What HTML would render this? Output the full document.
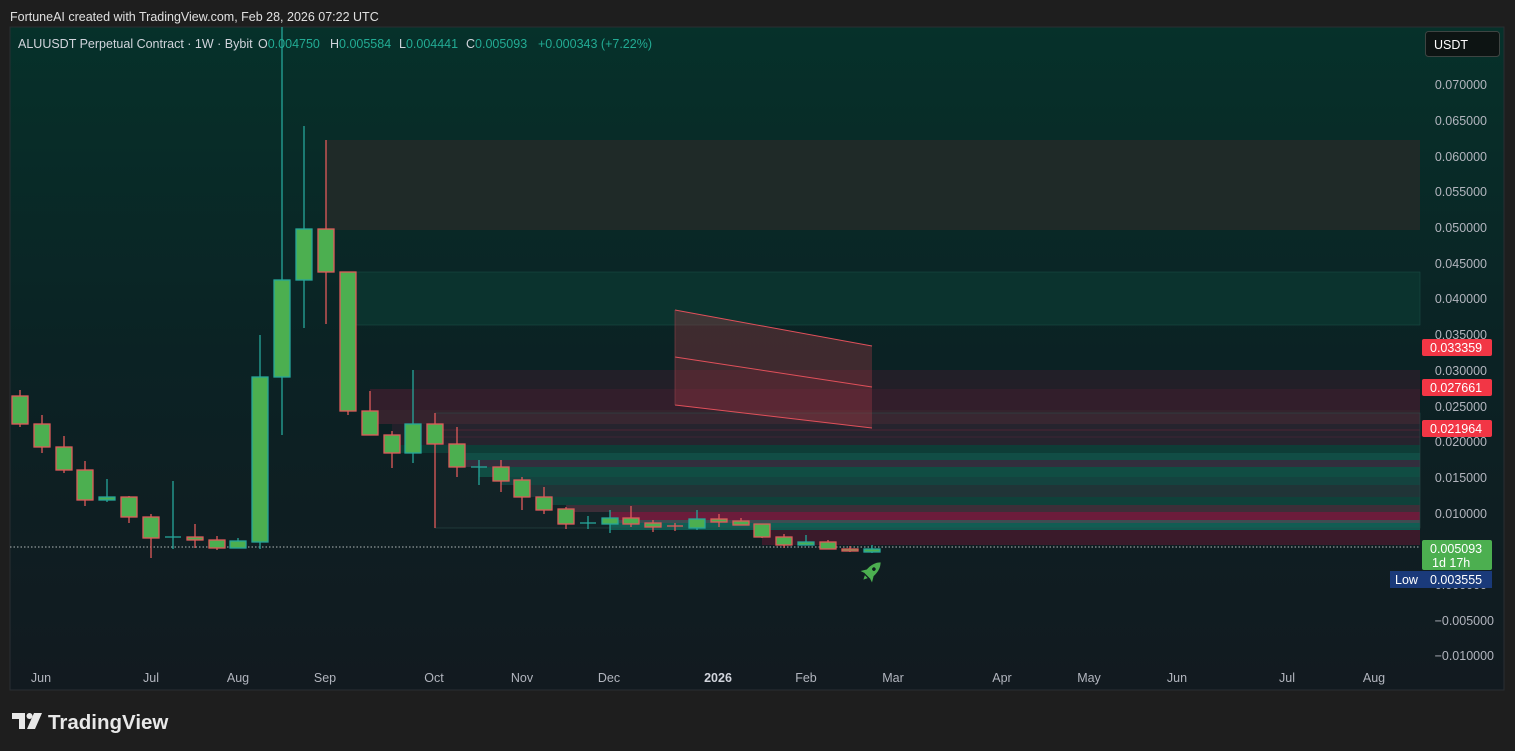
<!DOCTYPE html>
<html><head><meta charset="utf-8"><style>
html,body{margin:0;padding:0;background:#1e1e1e;width:1515px;height:751px;overflow:hidden;font-family:"Liberation Sans",Arial,sans-serif}
</style></head><body>
<svg width="1515" height="751" viewBox="0 0 1515 751" xmlns="http://www.w3.org/2000/svg" font-family="Liberation Sans, Arial, sans-serif">
<defs>
<linearGradient id="bg" x1="0" y1="0" x2="0" y2="1">
<stop offset="0" stop-color="#06312a"/><stop offset="0.5" stop-color="#0b2224"/><stop offset="1" stop-color="#121a20"/>
</linearGradient>
</defs>
<rect width="1515" height="751" fill="#1e1e1e"/>
<text x="10" y="21" font-size="12.5" fill="#e0e0e0">FortuneAI created with TradingView.com, Feb 28, 2026 07:22 UTC</text>
<rect x="10" y="27" width="1494" height="663" fill="url(#bg)" stroke="#2a2e33"/>
<!-- zones -->
<rect x="326" y="140" width="1094" height="90" fill="#1f2a28"/>
<rect x="348" y="272" width="1072" height="53" fill="#0b332e" stroke="#1a4a44" stroke-width="0.6"/>
<rect x="413" y="370" width="1007" height="19" fill="#221f28"/>
<rect x="370" y="389" width="1050" height="21" fill="#321e2b"/>
<rect x="370" y="410" width="1050" height="14" fill="#35232d"/>
<rect x="392" y="424" width="1028" height="21" fill="#22202a"/>
<line x1="435" y1="430" x2="1420" y2="430" stroke="#4a2030"/>
<line x1="435" y1="437" x2="1420" y2="437" stroke="#3a2030"/>
<rect x="392" y="445" width="1028" height="8" fill="#0a3a33"/>
<rect x="457" y="453" width="963" height="7" fill="#0d4a42"/>
<rect x="457" y="460" width="963" height="7" fill="#2e2a3a"/>
<rect x="479" y="467" width="941" height="10" fill="#0c4a40"/>
<rect x="501" y="477" width="919" height="8" fill="#10403c"/>
<rect x="522" y="485" width="898" height="12" fill="#1c3034"/>
<rect x="544" y="497" width="876" height="8" fill="#0b3e37"/>
<rect x="566" y="505" width="854" height="7" fill="#3a2a35"/>
<rect x="610" y="512" width="810" height="8" fill="#6a1838"/>
<rect x="610" y="520" width="810" height="3" fill="#3a4a4f"/>
<rect x="610" y="523" width="810" height="7" fill="#0d5a50"/>
<rect x="762" y="530" width="658" height="15" fill="#3a1a2a"/>
<rect x="435" y="413" width="985" height="115" fill="#ffffff" fill-opacity="0.02" stroke="#2a4a48" stroke-width="0.6"/>
<!-- channel -->
<polygon points="675,310 872,346 872,428 675,405" fill="#b84048" fill-opacity="0.3"/>
<line x1="675" y1="310" x2="872" y2="346" stroke="#e0505a" stroke-width="1"/>
<line x1="675" y1="357" x2="872" y2="387" stroke="#e0505a" stroke-width="1"/>
<line x1="675" y1="405" x2="872" y2="428" stroke="#e0505a" stroke-width="1"/>
<line x1="675" y1="310" x2="675" y2="405" stroke="#8a4048" stroke-width="0.6"/>
<!-- price line -->
<line x1="10" y1="547" x2="1420" y2="547" stroke="#b0b8b8" stroke-dasharray="1.5,2" stroke-width="1"/>
<!-- candles -->
<g stroke-width="1.3" fill="#4caf50">
<g stroke="#e05a5a"><line x1="20" y1="390" x2="20" y2="427"/><rect x="12" y="396" width="16" height="28"/></g>
<g stroke="#e05a5a"><line x1="42" y1="415" x2="42" y2="453"/><rect x="34" y="424" width="16" height="23"/></g>
<g stroke="#e05a5a"><line x1="64" y1="436" x2="64" y2="473"/><rect x="56" y="447" width="16" height="23"/></g>
<g stroke="#e05a5a"><line x1="85" y1="461" x2="85" y2="506"/><rect x="77" y="470" width="16" height="30"/></g>
<g stroke="#26a69a"><line x1="107" y1="479" x2="107" y2="502"/><rect x="99" y="497" width="16" height="3"/></g>
<g stroke="#e05a5a"><line x1="129" y1="496" x2="129" y2="523"/><rect x="121" y="497" width="16" height="20"/></g>
<g stroke="#e05a5a"><line x1="151" y1="514" x2="151" y2="558"/><rect x="143" y="517" width="16" height="21"/></g>
<g stroke="#26a69a"><line x1="173" y1="481" x2="173" y2="549"/><line x1="165" y1="537" x2="181" y2="537"/></g>
<g stroke="#e05a5a"><line x1="195" y1="524" x2="195" y2="548"/><rect x="187" y="537" width="16" height="3"/></g>
<g stroke="#e05a5a"><line x1="217" y1="536" x2="217" y2="550"/><rect x="209" y="540" width="16" height="8"/></g>
<g stroke="#26a69a"><line x1="238" y1="538" x2="238" y2="548"/><rect x="230" y="541" width="16" height="7"/></g>
<g stroke="#26a69a"><line x1="260" y1="335" x2="260" y2="549"/><rect x="252" y="377" width="16" height="165"/></g>
<g stroke="#26a69a"><line x1="282" y1="27" x2="282" y2="435"/><rect x="274" y="280" width="16" height="97"/></g>
<g stroke="#26a69a"><line x1="304" y1="126" x2="304" y2="328"/><rect x="296" y="229" width="16" height="51"/></g>
<g stroke="#e05a5a"><line x1="326" y1="140" x2="326" y2="324"/><rect x="318" y="229" width="16" height="43"/></g>
<g stroke="#e05a5a"><line x1="348" y1="272" x2="348" y2="415"/><rect x="340" y="272" width="16" height="139"/></g>
<g stroke="#e05a5a"><line x1="370" y1="391" x2="370" y2="435"/><rect x="362" y="411" width="16" height="24"/></g>
<g stroke="#e05a5a"><line x1="392" y1="431" x2="392" y2="468"/><rect x="384" y="435" width="16" height="18"/></g>
<g stroke="#26a69a"><line x1="413" y1="370" x2="413" y2="463"/><rect x="405" y="424" width="16" height="29"/></g>
<g stroke="#e05a5a"><line x1="435" y1="413" x2="435" y2="528"/><rect x="427" y="424" width="16" height="20"/></g>
<g stroke="#e05a5a"><line x1="457" y1="427" x2="457" y2="477"/><rect x="449" y="444" width="16" height="23"/></g>
<g stroke="#26a69a"><line x1="479" y1="460" x2="479" y2="485"/><line x1="471" y1="467" x2="487" y2="467"/></g>
<g stroke="#e05a5a"><line x1="501" y1="460" x2="501" y2="492"/><rect x="493" y="467" width="16" height="14"/></g>
<g stroke="#e05a5a"><line x1="522" y1="477" x2="522" y2="510"/><rect x="514" y="480" width="16" height="17"/></g>
<g stroke="#e05a5a"><line x1="544" y1="487" x2="544" y2="514"/><rect x="536" y="497" width="16" height="13"/></g>
<g stroke="#e05a5a"><line x1="566" y1="507" x2="566" y2="529"/><rect x="558" y="509" width="16" height="15"/></g>
<g stroke="#26a69a"><line x1="588" y1="516" x2="588" y2="529"/><line x1="580" y1="523" x2="596" y2="523"/></g>
<g stroke="#26a69a"><line x1="610" y1="510" x2="610" y2="533"/><rect x="602" y="518" width="16" height="6"/></g>
<g stroke="#e05a5a"><line x1="631" y1="506" x2="631" y2="527"/><rect x="623" y="518" width="16" height="6"/></g>
<g stroke="#e05a5a"><line x1="653" y1="520" x2="653" y2="532"/><rect x="645" y="523" width="16" height="4"/></g>
<g stroke="#e05a5a"><line x1="675" y1="523" x2="675" y2="531"/><line x1="667" y1="526" x2="683" y2="526"/></g>
<g stroke="#26a69a"><line x1="697" y1="510" x2="697" y2="530"/><rect x="689" y="519" width="16" height="9"/></g>
<g stroke="#e05a5a"><line x1="719" y1="514" x2="719" y2="527"/><rect x="711" y="519" width="16" height="3"/></g>
<g stroke="#e05a5a"><line x1="741" y1="518" x2="741" y2="525"/><rect x="733" y="521" width="16" height="4"/></g>
<g stroke="#e05a5a"><line x1="762" y1="524" x2="762" y2="538"/><rect x="754" y="524" width="16" height="13"/></g>
<g stroke="#e05a5a"><line x1="784" y1="534" x2="784" y2="548"/><rect x="776" y="537" width="16" height="8"/></g>
<g stroke="#26a69a"><line x1="806" y1="535" x2="806" y2="545"/><rect x="798" y="542" width="16" height="3"/></g>
<g stroke="#e05a5a"><line x1="828" y1="540" x2="828" y2="549"/><rect x="820" y="542" width="16" height="7"/></g>
<g stroke="#e05a5a"><line x1="850" y1="546" x2="850" y2="552"/><rect x="842" y="549" width="16" height="2"/></g>
<g stroke="#26a69a"><line x1="872" y1="545" x2="872" y2="553"/><rect x="864" y="549" width="16" height="3"/></g>
</g>
<!-- rocket -->
<g fill="#4caf50" transform="translate(872,571) rotate(45) scale(1.35)">
<path d="M0,-9 C4,-5 4,1 3,5 L-3,5 C-4,1 -4,-5 0,-9 Z"/>
<path d="M-3,1 L-6,6 L-3,5 Z M3,1 L6,6 L3,5 Z"/>
<path d="M-1.5,6 L0,9 L1.5,6 Z"/>
<circle cx="0" cy="-2" r="1.3" fill="#0f1e20"/>
</g>
<!-- legend -->
<text y="48" font-size="12.5" fill="#d1d4dc"><tspan x="18">ALUUSDT Perpetual Contract · 1W · Bybit</tspan><tspan x="258">O</tspan><tspan fill="#22ab94">0.004750</tspan><tspan x="330">H</tspan><tspan fill="#22ab94">0.005584</tspan><tspan x="399">L</tspan><tspan fill="#22ab94">0.004441</tspan><tspan x="466">C</tspan><tspan fill="#22ab94">0.005093</tspan><tspan x="538" fill="#22ab94">+0.000343 (+7.22%)</tspan></text>
<!-- USDT -->
<rect x="1425.5" y="31.5" width="74" height="25" rx="3" fill="#0d1413" stroke="#3e4442"/>
<text x="1434" y="49" font-size="12.5" fill="#ffffff">USDT</text>
<!-- price axis -->
<g font-size="12.5" fill="#b2b5be" text-anchor="end">
<text x="1487" y="89">0.070000</text>
<text x="1487" y="125">0.065000</text>
<text x="1487" y="161">0.060000</text>
<text x="1487" y="196">0.055000</text>
<text x="1487" y="232">0.050000</text>
<text x="1487" y="268">0.045000</text>
<text x="1487" y="303">0.040000</text>
<text x="1487" y="339">0.035000</text>
<text x="1487" y="375">0.030000</text>
<text x="1487" y="411">0.025000</text>
<text x="1487" y="446">0.020000</text>
<text x="1487" y="482">0.015000</text>
<text x="1487" y="518">0.010000</text>
<text x="1487" y="589">0.000000</text>
<text x="1494" y="625">−0.005000</text>
<text x="1494" y="660">−0.010000</text>
</g>
<g font-size="12.5" fill="#ffffff">
<rect x="1422" y="339" width="70" height="17" rx="2" fill="#f23645"/><text x="1430" y="352">0.033359</text>
<rect x="1422" y="379" width="70" height="17" rx="2" fill="#f23645"/><text x="1430" y="392">0.027661</text>
<rect x="1422" y="420" width="70" height="17" rx="2" fill="#f23645"/><text x="1430" y="433">0.021964</text>
<rect x="1422" y="540" width="70" height="30" rx="2" fill="#4caf50"/><text x="1430" y="553">0.005093</text><text x="1432" y="567">1d 17h</text>
<rect x="1390" y="571" width="32" height="17" fill="#1a3a7a"/><text x="1395" y="584">Low</text>
<rect x="1422" y="571" width="70" height="17" fill="#1a3a7a"/><text x="1430" y="584">0.003555</text>
</g>
<!-- time axis -->
<g font-size="12.5" fill="#b2b5be" text-anchor="middle">
<text x="41" y="682">Jun</text><text x="151" y="682">Jul</text><text x="238" y="682">Aug</text><text x="325" y="682">Sep</text>
<text x="434" y="682">Oct</text><text x="522" y="682">Nov</text><text x="609" y="682">Dec</text>
<text x="718" y="682" font-weight="bold" fill="#d1d4dc">2026</text>
<text x="806" y="682">Feb</text><text x="893" y="682">Mar</text><text x="1002" y="682">Apr</text><text x="1089" y="682">May</text>
<text x="1177" y="682">Jun</text><text x="1287" y="682">Jul</text><text x="1374" y="682">Aug</text>
</g>
<!-- logo -->
<g fill="#e8e8e8">
<path d="M12,713 H25 V729 H19 V719 H12 Z"/>
<circle cx="29.5" cy="716" r="3"/>
<path d="M34,713 H42 L35,729 H27 Z"/>
<text x="48" y="729" font-size="20.5" font-weight="bold">TradingView</text>
</g>
</svg>
</body></html>
